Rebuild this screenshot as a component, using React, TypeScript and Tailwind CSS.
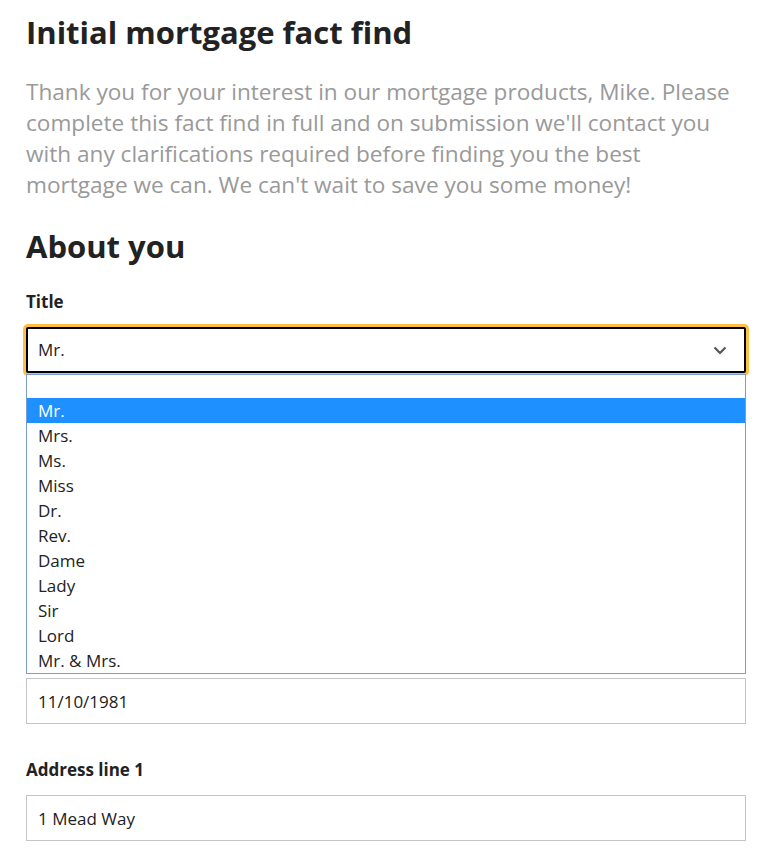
import { useState } from "react";

const titles = ["", "Mr.", "Mrs.", "Ms.", "Miss", "Dr.", "Rev.", "Dame", "Lady", "Sir", "Lord", "Mr. & Mrs."];

const Field = ({ label, value, children }: { label: string; value?: string; children?: React.ReactNode }) => (
  <div className="mb-[34px]">
    <label className="block text-[17px] leading-[24px] font-bold text-[#222] mb-[13px]">{label}</label>
    {children ?? (
      <input
        readOnly
        value={value ?? ""}
        className="block w-full h-[46px] border border-[#c4c4c4] px-[11px] text-[17px] text-[#222] outline-none bg-white"
      />
    )}
  </div>
);

export default function App() {
  const [title] = useState("Mr.");
  return (
    <div className="bg-white min-h-screen text-[#222]" style={{ fontFamily: '"Open Sans", "Noto Sans", sans-serif' }}>
      <div className="w-[720px] ml-[26px] pt-[12px]">
        <h1 className="text-[31px] leading-[40px] font-bold text-[#222]">Initial mortgage fact find</h1>
        <p className="mt-[24px] text-[22.6px] leading-[31px] text-[#999]">
          Thank you for your interest in our mortgage products, Mike. Please complete this fact find in full and on
          submission we'll contact you with any clarifications required before finding you the best mortgage we can. We
          can't wait to save you some money!
        </p>
        <h2 className="mt-[24px] text-[31px] leading-[44px] font-bold text-[#222]">About you</h2>
        <div className="mt-[22px]">
          <Field label="Title">
            <div className="relative">
              <div className="flex items-center justify-between h-[46px] border-2 border-black rounded-[2px] shadow-[0_0_0_3px_#ffbf47] px-[10px] bg-white">
                <span className="text-[17px]">{title}</span>
                <svg width="14" height="9" viewBox="0 0 14 9" className="mr-[7px]">
                  <path d="M1.5 1.5 L7 7 L12.5 1.5" fill="none" stroke="#555" strokeWidth="2.2" />
                </svg>
              </div>
              <ul className="absolute z-10 left-0 right-0 top-[47px] border border-[#7a9cd3] bg-white">
                {titles.map((t, i) => (
                  <li
                    key={i}
                    className={`${i === 0 ? "h-[23px]" : "h-[25px]"} leading-[25px] px-[11px] text-[17px] ${
                      t === title ? "bg-[#1e90ff] text-white" : "text-[#222]"
                    }`}
                  >
                    {t}
                  </li>
                ))}
              </ul>
            </div>
          </Field>
          <Field label="First name" value="Mike" />
          <Field label="Last name" value="Smith" />
          <Field label="Date of birth" value="11/10/1981" />
          <Field label="Address line 1" value="1 Mead Way" />
        </div>
      </div>
    </div>
  );
}
